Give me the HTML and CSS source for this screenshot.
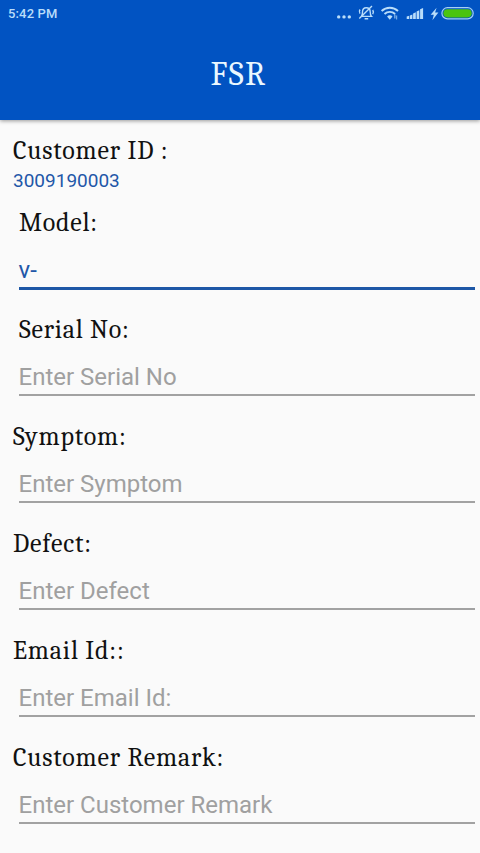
FILE: index.html
```
<!DOCTYPE html>
<html lang="en">
<head>
<meta charset="utf-8">
<title>FSR</title>
<link rel="stylesheet" href="styles.css">
</head>
<body>
<header class="app-header">
  <div class="status-bar">
    <span class="time">5:42 PM</span>
    <svg class="status-icons" width="150" height="28" viewBox="-10 0 150 28" aria-hidden="true">
      <g fill="#b9ddfa">
        <circle cx="-1.300" cy="16.900" r="1.700"/><circle cx="4" cy="16.900" r="1.700"/><circle cx="9.300" cy="16.900" r="1.700"/>
        <path d="M66.700 19v-2.400l2.500-.8V19zM69.900 19v-3.600l2.500-1V19zM73.100 19v-5.500l2.700-1.200V19zM76.600 19v-7.500l2.700-1.200V19zM80.100 19V9.300l3-1.300v11z"/>
        <path d="M96.600 7.800l-6 7h3.200l-1.400 5.400 6-7.800h-3.300z"/>
        <path d="M49.800 19.800l-2.700-3.400a3.700 3.700 0 0 1 5.400 0z"/>
        <path d="M54.200 14.500h1.300v4h-1.300zM56.100 15.500h1.100v4h-1.100z" opacity=".7"/>
      </g>
      <g fill="none" stroke="#b9ddfa" stroke-width="1.400">
        <path d="M21.300 16.400h10.200c-1.300-1.200-1.300-2.300-1.300-4.300 0-2.600-1.500-4.300-3.900-4.300s-3.800 1.700-3.800 4.300c0 2 0 3.100-1.200 4.300zM24.600 18.700h3.600M19.300 18.600L32 6M20 9.500c-.8 1.200-.8 3 0 4.200M32.700 10c.8 1.200.8 3 0 4.200"/>
        <path d="M41.600 11a11.800 11.800 0 0 1 16.400 0M44.500 14a7.600 7.600 0 0 1 10.600 0" stroke-width="1.900"/>
      </g>
      <rect x="101.900" y="7.700" width="31.300" height="11.200" rx="5.600" fill="none" stroke="#a5d0f5" stroke-width="1.200"/>
      <rect x="103.400" y="9.200" width="28.300" height="8.200" rx="4.100" fill="#4ac410"/>
    </svg>
  </div>
  <h1 class="title">FSR</h1>
</header>
<main class="form">
  <section class="customer">
    <div class="label">Customer ID :</div>
    <div class="customer-id">3009190003</div>
  </section>
  <section class="field active">
    <div class="label indented">Model:</div>
    <div class="input">v-</div>
  </section>
  <section class="field">
    <div class="label indented">Serial No:</div>
    <div class="input">Enter Serial No</div>
  </section>
  <section class="field">
    <div class="label">Symptom:</div>
    <div class="input">Enter Symptom</div>
  </section>
  <section class="field">
    <div class="label">Defect:</div>
    <div class="input">Enter Defect</div>
  </section>
  <section class="field">
    <div class="label">Email Id::</div>
    <div class="input">Enter Email Id:</div>
  </section>
  <section class="field">
    <div class="label">Customer Remark:</div>
    <div class="input">Enter Customer Remark</div>
  </section>
</main>
</body>
</html>
```
FILE: styles.css
```
* { box-sizing: border-box; }
body {
  margin: 0;
  height: 853px;
  overflow: hidden;
  background: #fafafa;
  font-family: Roboto, sans-serif;
}
.app-header {
  height: 120px;
  background: #0153c2;
  box-shadow: 0 1px 4px rgba(0, 0, 0, .4);
}
.status-bar {
  height: 28px;
  padding: 0 0 0 8px;
  display: flex;
  align-items: center;
  justify-content: space-between;
}
.time {
  font-size: 13px;
  line-height: 28px;
  font-weight: 500;
  letter-spacing: .15px;
  color: #b9ddfa;
}
.status-icons { display: block; }
.title {
  margin: 0;
  padding-top: 26px;
  font: 400 33px/40px Cambria, Caladea, "Liberation Serif", serif;
  letter-spacing: 1.3px;
  text-indent: -3px;
  text-align: center;
  color: #eaf8ff;
}
.form { padding: 15px 5px 0 13px; }
.customer { height: 72px; }
.label {
  height: 30px;
  font: 400 26px/32px Cambria, Caladea, "Liberation Serif", serif;
  letter-spacing: .82px;
  color: #111;
  white-space: pre;
}
.indented {
  padding-left: 6px;
  letter-spacing: .75px;
}
.customer-id {
  font-size: 19px;
  line-height: 31px;
  color: #1f57a8;
}
.field { height: 107px; }
.input {
  margin-left: 5.500px;
  height: 52px;
  padding-top: 17px;
  font-size: 24px;
  line-height: 32px;
  color: #a0a0a0;
  border-bottom: 2px solid #a2a2a2;
}
.active .input {
  height: 53px;
  color: #1f57a8;
  border-bottom: 3px solid #1d57a6;
}
```
